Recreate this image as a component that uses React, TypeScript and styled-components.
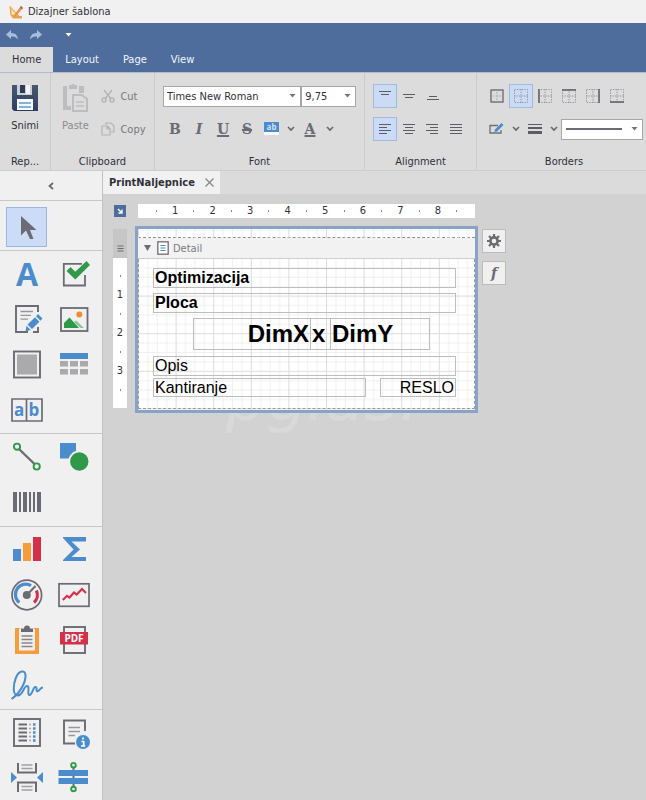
import React from 'react';
import styled, { createGlobalStyle } from 'styled-components';

const GREY = '#6b6b75';
const BLUE = '#4a8ccc';
const GREEN = '#2f994a';
const RED = '#d52f49';
const ORANGE = '#f79c38';

const GlobalStyle = createGlobalStyle`
  * { box-sizing: border-box; }
  body { margin: 0; }
  body, button, input, select {
    font-family: 'DejaVu Sans Condensed', 'DejaVu Sans', sans-serif;
    font-size: 11px;
    color: #30303a;
  }
  button { padding: 0; border: 0; background: none; }
  h1, p { margin: 0; font-size: 11px; font-weight: normal; }
  svg { display: block; flex: none; overflow: visible; }
`;

const Window = styled.div`
  display: flex;
  flex-direction: column;
  height: 100vh;
  overflow: hidden;
  background: #d2d2d2;
`;

const TitleBar = styled.header`
  display: flex;
  align-items: center;
  gap: 4px;
  height: 23px;
  flex: none;
  padding: 0 8px;
  background: #f1f1f1;
`;

const QuickAccess = styled.div`
  display: flex;
  align-items: center;
  gap: 10px;
  height: 24px;
  flex: none;
  padding: 0 5px;
  background: #4e6d9d;
`;

const QuickButton = styled.button<{ $spaced?: boolean }>`
  display: flex;
  align-items: center;
  justify-content: center;
  width: 14px;
  height: 14px;
  margin-left: ${(p) => (p.$spaced ? '8px' : '0')};
`;

const RibbonTabs = styled.nav`
  display: flex;
  height: 25px;
  flex: none;
  background: #4e6d9d;
`;

const RibbonTab = styled.button<{ $active?: boolean }>`
  padding: 0 12px;
  color: ${(p) => (p.$active ? '#30303a' : '#f4f7fb')};
  background: ${(p) => (p.$active ? '#dcdcdc' : 'transparent')};
`;

const Ribbon = styled.div`
  display: flex;
  height: 99px;
  flex: none;
  overflow: hidden;
  background: #dcdcdc;
  border-top: 1px solid #b4bccb;
  border-bottom: 1px solid #cdcdcd;
`;

const Group = styled.section<{ $width: number }>`
  display: flex;
  flex-direction: column;
  justify-content: space-between;
  width: ${(p) => p.$width}px;
  flex: none;
  padding: 11px 8px 0;
  border-right: 1px solid #cbcbcb;
`;

const GroupBody = styled.div`
  display: flex;
  justify-content: center;
  gap: 10px;
`;

const GroupLabel = styled.p`
  line-height: 16px;
  text-align: center;
`;

const Rows = styled.div`
  display: flex;
  flex-direction: column;
  gap: 9px;
`;

const Row = styled.div`
  display: flex;
  align-items: center;
  height: 24px;
`;

const LargeButton = styled.button<{ $muted?: boolean }>`
  display: flex;
  flex-direction: column;
  align-items: center;
  gap: 3px;
  width: 32px;
  height: 57px;
  color: ${(p) => (p.$muted ? '#8b8b8f' : '#30303a')};
`;

const SmallButton = styled.button`
  display: flex;
  align-items: center;
  gap: 5px;
  color: #77777b;
`;

const ToolButton = styled.button<{ $on?: boolean }>`
  display: flex;
  align-items: center;
  justify-content: center;
  width: 24px;
  height: 24px;
  border: 1px solid ${(p) => (p.$on ? '#a3b9df' : 'transparent')};
  background: ${(p) => (p.$on ? '#cbdaf5' : 'transparent')};
`;

const Letter = styled.span<{ $kind?: 'italic' | 'underline' | 'strike' }>`
  font-family: 'DejaVu Serif', serif;
  font-size: 14px;
  line-height: 16px;
  font-weight: bold;
  color: ${GREY};
  font-style: ${(p) => (p.$kind === 'italic' ? 'italic' : 'normal')};
  text-decoration: ${(p) =>
    p.$kind === 'underline' ? 'underline 2px' : p.$kind === 'strike' ? 'line-through 2px' : 'none'};
`;

const ChevronButton = styled.button`
  display: flex;
  align-items: center;
  justify-content: center;
  width: 15px;
  height: 24px;
`;

const SelectBox = styled.div<{ $width: number }>`
  display: grid;
  align-items: center;
  width: ${(p) => p.$width}px;
  height: 21px;
  background: #fff;
  border: 1px solid #a6a6a6;
  > * { grid-area: 1 / 1; }
  > svg { justify-self: end; margin-right: 4px; pointer-events: none; }
`;

const Select = styled.select`
  appearance: none;
  width: 100%;
  height: 19px;
  padding: 0 3px;
  border: 0;
  background: transparent;
`;

const LineSample = styled.span`
  height: 2px;
  margin: 0 20px 0 4px;
  background: ${GREY};
`;

const Main = styled.div`
  display: flex;
  flex: 1;
  min-height: 0;
`;

const Toolbox = styled.aside`
  width: 103px;
  flex: none;
  overflow: hidden;
  background: #f0f0f0;
  border-right: 1px solid #c2c2c2;
`;

const Collapse = styled.button`
  display: flex;
  align-items: center;
  justify-content: center;
  width: 100%;
  height: 30px;
  border-bottom: 1px solid #c8c8c8;
`;

const ToolSection = styled.div`
  display: grid;
  grid-template-columns: 41px 41px;
  grid-auto-rows: 45px;
  column-gap: 6px;
  align-items: center;
  padding: 0 6px 2px;
  border-bottom: 1px solid #c8c8c8;
`;

const PointerSection = styled(ToolSection)`
  padding: 3px 6px 1px;
`;

const Tool = styled.button<{ $on?: boolean }>`
  display: flex;
  align-items: center;
  justify-content: center;
  height: 40px;
  border: 1px solid ${(p) => (p.$on ? '#9db5e0' : 'transparent')};
  background: ${(p) => (p.$on ? '#ccdbf6' : 'transparent')};
`;

const Workspace = styled.main`
  flex: 1;
  min-width: 0;
`;

const DocTabs = styled.div`
  display: flex;
  height: 23px;
  background: #dbdbdb;
`;

const DocTab = styled.div`
  display: flex;
  align-items: center;
  gap: 10px;
  padding: 0 6px;
  background: #f1f1f1;
  font-weight: bold;
`;

const Designer = styled.div`
  display: grid;
  grid-template-columns: 14px 343px 24px;
  grid-template-rows: 15px 187px;
  gap: 7px 8px;
  padding: 10px;
`;

const Corner = styled.button`
  display: flex;
  align-items: center;
  justify-content: center;
  width: 12px;
  height: 12px;
  margin: 1px;
  background: #4e6d9d;
`;

const HRuler = styled.div`
  display: grid;
  grid-auto-flow: column;
  grid-auto-columns: 1fr;
  align-items: center;
  justify-items: center;
  height: 14px;
  margin: 0 3px;
  padding: 0 9px;
  background: #fff;
`;

const VRuler = styled.div`
  margin: 3px 0 5px;
  display: flex;
  flex-direction: column;
`;

const VRulerHead = styled.div`
  display: flex;
  align-items: flex-end;
  justify-content: center;
  height: 29px;
  padding-bottom: 6px;
  background: #c6c6c6;
`;

const VRulerScale = styled.div`
  display: grid;
  grid-auto-rows: 1fr;
  align-items: center;
  justify-items: center;
  flex: 1;
  padding: 9px 0;
  background: #fff;
`;

const Tick = styled.i`
  width: 1px;
  height: 2px;
  background: #8a8a8a;
`;

const Mark = styled.span`
  line-height: 14px;
`;

const SurfaceArea = styled.div`
  position: relative;
`;

const Watermark = styled.span`
  position: absolute;
  left: 91px;
  top: 135px;
  font: italic 64px/74px 'DejaVu Sans', sans-serif;
  color: #d9d9d9;
`;

const Surface = styled.div`
  position: relative;
  height: 187px;
  display: flex;
  flex-direction: column;
  border: 3px solid #8aa1c8;
  background: #fff;
`;

const GridLines = styled.svg`
  position: absolute;
  left: 0;
  top: 0;
  width: 100%;
  height: 100%;
`;

const Margin = styled.div`
  height: 9px;
  border-bottom: 1px dashed #8c8c8c;
`;

const BandHeader = styled.div`
  position: relative;
  display: flex;
  align-items: center;
  gap: 6px;
  height: 21px;
  padding: 0 6px;
  background: #f2f2f2;
  border-bottom: 1px solid #cfcfcf;
  color: #7a7a80;
`;

const BandName = styled.span`
  margin-left: -2px;
`;

const Band = styled.div`
  position: relative;
  flex: 1;
  margin-bottom: 1px;
  border: 1px dashed #9a9a9a;
  border-top: 0;
`;

const Field = styled.div<{
  $x: number;
  $y: number;
  $w: number;
  $h: number;
  $size?: number;
  $bold?: boolean;
  $align?: string;
}>`
  position: absolute;
  left: ${(p) => p.$x}px;
  top: ${(p) => p.$y}px;
  width: ${(p) => p.$w}px;
  height: ${(p) => p.$h}px;
  padding: 0 1px;
  border: 1px solid #bdbdbd;
  font-family: 'Liberation Sans', Arial, sans-serif;
  font-size: ${(p) => p.$size ?? 16}px;
  line-height: ${(p) => p.$h - 2}px;
  font-weight: ${(p) => (p.$bold ? 'bold' : 'normal')};
  text-align: ${(p) => p.$align ?? 'left'};
  white-space: nowrap;
  color: #000;
`;

const SideButtons = styled.div`
  display: flex;
  flex-direction: column;
  gap: 8px;
  padding-top: 3px;
  margin-left: -4px;
`;

const SideButton = styled.button`
  display: flex;
  align-items: center;
  justify-content: center;
  width: 24px;
  height: 24px;
  background: #f0f0f0;
  border: 1px solid #bcbcbc;
`;

const Fx = styled.span`
  font: italic bold 14px/16px 'DejaVu Serif', serif;
  color: ${GREY};
`;

/* ---------- small glyphs ---------- */

const Caret = ({ color = '#77777b' }: { color?: string }) => (
  <svg width="7" height="4" viewBox="0 0 7 4"><path d="M0.5 0H6.5L3.5 3.5Z" fill={color} /></svg>
);

const Chevron = () => (
  <svg width="8" height="6" viewBox="0 0 8 6"><path d="M1 1L4 4L7 1" fill="none" stroke="#66666c" strokeWidth="1.6" /></svg>
);

const Lines = ({ rows, top = 0 }: { rows: [number, number][]; top?: number }) => (
  <svg width="14" height="14" viewBox="0 0 14 14">
    {rows.map(([a, b], i) => (
      <path key={i} d={`M${a} ${top + i * 3 + 0.5}H${b}`} stroke="#5c5c66" />
    ))}
  </svg>
);

const BorderIcon = ({ side }: { side: 'all' | 'none' | 'left' | 'top' | 'right' | 'bottom' }) => (
  <svg width="14" height="14" viewBox="0 0 14 14" fill="none">
    {side === 'all' ? (
      <>
        <path d="M7 3V11M3 7H11" stroke="#b0b0b4" strokeDasharray="2 1" />
        <rect x="1" y="1" width="12" height="12" stroke="#66666e" strokeWidth="1.3" />
      </>
    ) : (
      <path d="M0.5 0.5H13.5V13.5H0.5ZM7 0V14M0 7H14" stroke="#8e8e98" strokeDasharray="1.3 1.2" strokeWidth="0.9" />
    )}
    {side === 'left' && <path d="M1 0V14" stroke="#5c5c66" strokeWidth="1.5" />}
    {side === 'right' && <path d="M13 0V14" stroke="#5c5c66" strokeWidth="1.5" />}
    {side === 'top' && <path d="M0 1H14" stroke="#5c5c66" strokeWidth="1.5" />}
    {side === 'bottom' && <path d="M0 13H14" stroke="#5c5c66" strokeWidth="1.5" />}
  </svg>
);

/* ---------- toolbox icons ---------- */

const Svg32 = ({ children }: { children: React.ReactNode }) => (
  <svg width="32" height="32" viewBox="0 0 32 32" fill="none">{children}</svg>
);

const toolIcons: Record<string, React.ReactNode> = {
  Pointer: <path d="M10 5V24.5L15 19.5L19 28H22.5L19 19H25.5Z" fill={GREY} />,
  Label: <text x="16" y="28" textAnchor="middle" fontFamily="Open Sans, sans-serif" fontWeight="bold" fontSize="32" fill={BLUE}>A</text>,
  'Check Box': (
    <>
      <path d="M24 5.8H5.8V27.5H27V17" stroke={GREY} strokeWidth="1.8" />
      <path d="M8.5 13L12.5 9L17.3 13.8L28.5 3L32 7L17.3 21.5Z" fill={GREEN} />
    </>
  ),
  'Rich Text': (
    <>
      <path d="M27 9V3H5V29H17M27 24V29H22" stroke={GREY} strokeWidth="1.9" />
      <path d="M9.5 8.5H22M9.5 12.3H20M9.5 16.2H17" stroke="#96969c" strokeWidth="1.3" />
      <path d="M27 11L31.5 15.5L29.5 17.8L25 13.3ZM24 14.3L28.5 18.8L21 26L16.5 21.5ZM15.5 22.8L19.7 27L14.5 28.5Z" fill={BLUE} />
    </>
  ),
  'Picture Box': (
    <>
      <rect x="3" y="5" width="26.5" height="23" stroke={GREY} strokeWidth="1.8" />
      <path d="M6 25V20L11.5 14.500L21 25Z" fill={GREEN} />
      <path d="M16 19L18 17.5L26 25H22.5Z" fill="#8bc29a" />
      <circle cx="21.3" cy="11.5" r="3" fill="#f58b2c" />
    </>
  ),
  Panel: (
    <>
      <rect x="3" y="3.5" width="26" height="26" stroke={GREY} strokeWidth="1.9" />
      <rect x="6" y="6.5" width="20" height="20" fill="#aaaaad" />
    </>
  ),
  Table: (
    <>
      <rect x="2" y="5" width="28" height="6" fill={BLUE} />
      <path d="M2 13H10V18.500H2ZM12 13H20V18.500H12ZM22 13H30V18.500H22ZM2 21H10V26.500H2ZM12 21H20V26.500H12ZM22 21H30V26.500H22Z" fill="#aaaaad" />
    </>
  ),
  'Character Comb': (
    <>
      <path d="M1 6H31V28H1ZM15.5 6V28" stroke={GREY} strokeWidth="1.7" />
      <text x="8.2" y="23" textAnchor="middle" fontFamily="Open Sans, sans-serif" fontWeight="bold" fontSize="17" fill={BLUE}>a</text>
      <text x="23" y="23" textAnchor="middle" fontFamily="Open Sans, sans-serif" fontWeight="bold" fontSize="17" fill={BLUE}>b</text>
    </>
  ),
  Line: (
    <>
      <path d="M8 8L23.5 23" stroke={GREY} strokeWidth="2.4" />
      <circle cx="6" cy="5.7" r="3.1" stroke={GREEN} strokeWidth="1.9" />
      <circle cx="25.7" cy="25.5" r="3.1" stroke={GREEN} strokeWidth="1.9" />
    </>
  ),
  Shape: (
    <>
      <rect x="2" y="2" width="16" height="15.5" fill={BLUE} />
      <circle cx="21.3" cy="20.5" r="11" fill="#f0f0f0" />
      <circle cx="21.3" cy="20.5" r="9.2" fill={GREEN} />
    </>
  ),
  'Bar Code': <path d="M2 6H6V26H2ZM8 6H10V26H8ZM12 6H16V26H12ZM18 6H20V26H18ZM22 6H24V26H22ZM26 6H30V26H26Z" fill={GREY} />,
  Chart: (
    <>
      <rect x="2" y="15" width="8" height="12" fill={BLUE} />
      <rect x="12" y="9" width="8" height="18" fill={ORANGE} />
      <rect x="22" y="3" width="8" height="24" fill={RED} />
    </>
  ),
  'Pivot Grid': <path d="M5 3H28V7.500H13.500L22 15.500L13.500 23H28V27H5V26L15.5 15.500L5 4Z" fill={BLUE} />,
  Gauge: (
    <>
      <circle cx="15.8" cy="16" r="14.8" stroke={GREY} strokeWidth="1.7" />
      <path d="M8.3 23.5A10.3 10.3 0 0 1 20 6.6" stroke={BLUE} strokeWidth="3.2" />
      <path d="M25.4 11.5A10.3 10.3 0 0 1 23 23.5" stroke={RED} strokeWidth="3.2" />
      <path d="M15.8 16L24.5 7" stroke={GREY} strokeWidth="2" />
      <circle cx="15.8" cy="16" r="4" fill={GREY} />
    </>
  ),
  Sparkline: (
    <>
      <rect x="1" y="4.8" width="30" height="22.5" stroke={GREY} strokeWidth="1.7" />
      <path d="M4.8 21L9 16.8L11.5 18.5L16 13.5L18.7 15.5L24 10L28 14" stroke={RED} strokeWidth="2.1" />
    </>
  ),
  Clipboard: (
    <>
      <path d="M4 4H9V8H23V4H28V30H4Z" fill={ORANGE} />
      <rect x="8" y="5" width="16" height="21.5" fill="#f0f0f0" />
      <path d="M10 8V4.5H13A3 3 0 0 1 19 4.5H22V8Z" fill={GREY} />
      <path d="M10.5 12H21.5M10.5 15.5H21.5M10.5 19H21.5M10.5 22.5H21.5" stroke="#85858c" strokeWidth="1.4" />
    </>
  ),
  'PDF Content': (
    <>
      <rect x="6" y="3" width="21" height="26" stroke={GREY} strokeWidth="1.9" />
      <rect x="2" y="8" width="28" height="12.5" fill={RED} />
      <text x="16" y="18" textAnchor="middle" fontFamily="Open Sans, sans-serif" fontWeight="bold" fontSize="10" fill="#fff">PDF</text>
    </>
  ),
  Signature: (
    <path d="M0.500 30C8 25 15 14 14.500 6C14 0.500 8 1.500 5 8.500C1.500 17 2 26 6.500 26.500C12 27 12.500 17 16 17C19.500 17 15.500 26 18.500 26C21.500 26 22 17.500 24.500 18C27 18.500 24 23 27 22C29 21 29.500 18.500 32 18.500" stroke={BLUE} strokeWidth="2" />
  ),
  'Table Of Contents': (
    <>
      <rect x="3" y="2" width="26" height="27" stroke={GREY} strokeWidth="1.9" />
      <path d="M7.500 7.500H16M7.500 11.500H16M7.500 15.500H16M7.500 19.500H16M7.500 23.500H16" stroke={GREY} strokeWidth="1.9" />
      <path d="M18 7.500H20M18 11.500H20M18 15.500H20M18 19.500H20M18 23.500H20" stroke="#a5a5aa" strokeWidth="1.6" />
      <path d="M22 7.500H24.500M22 11.500H24.500M22 15.500H24.500M22 19.500H24.500M22 23.500H24.500" stroke={BLUE} strokeWidth="2.300" />
    </>
  ),
  'Page Info': (
    <>
      <path d="M27 14V3.500H6V26.500H17" stroke={GREY} strokeWidth="1.9" />
      <path d="M10.500 10.500H22M10.500 14.500H22M10.500 18.500H17" stroke="#96969c" strokeWidth="1.3" />
      <circle cx="25" cy="25" r="7" fill={BLUE} />
      <path d="M25 20.500V22.500M23.500 24.500H25.700V29M23 29H27.200" stroke="#fff" strokeWidth="1.7" />
    </>
  ),
  'Page Break': (
    <>
      <path d="M7 1V10.500H25V1M7 30V20.500H25V30" stroke={GREY} strokeWidth="2" />
      <path d="M10.500 3H21.500M10.500 6.500H21.500M10.500 24.500H21.500M10.500 28H21.500" stroke="#a0a0a5" strokeWidth="1.300" />
      <path d="M0 10V21L6 15.500ZM32 10V21L26 15.500Z" fill={BLUE} />
    </>
  ),
  'Cross-band Line': (
    <>
      <path d="M15.500 5V25" stroke={GREY} strokeWidth="2" />
      <path d="M0.500 8H30V14H0.500ZM0.500 16H30V22H0.500Z" fill={BLUE} />
      <circle cx="15.500" cy="3.200" r="2.300" stroke={GREEN} strokeWidth="1.900" />
      <circle cx="15.500" cy="27" r="2.300" stroke={GREEN} strokeWidth="1.900" />
    </>
  ),
};

const toolSections = [
  ['Label', 'Check Box', 'Rich Text', 'Picture Box', 'Panel', 'Table', 'Character Comb'],
  ['Line', 'Shape', 'Bar Code'],
  ['Chart', 'Pivot Grid', 'Gauge', 'Sparkline', 'Clipboard', 'PDF Content', 'Signature'],
  ['Table Of Contents', 'Page Info', 'Page Break', 'Cross-band Line'],
];

const ToolItem = ({ name, on }: { name: string; on?: boolean }) => (
  <Tool aria-label={name} $on={on}><Svg32>{toolIcons[name]}</Svg32></Tool>
);

/* ---------- ribbon icons ---------- */

const AppIcon = () => (
  <svg width="16" height="16" viewBox="0 0 16 16">
    <path d="M2 2.500L11 12L3 11.500Z" fill="#f8cf7c" stroke="#e9a04a" />
    <path d="M4 6.500L7 10L4.500 10Z" fill="#fff3d8" />
    <path d="M3 12H14V14.500H5Z" fill="#e8a254" />
    <path d="M13 2L15 4L8 12L6 12.500L6.500 10.500Z" fill="#e9924a" />
    <path d="M13 2L15 4L13.800 5.300L11.800 3.400Z" fill="#a86a58" />
  </svg>
);

const UndoIcon = ({ flip }: { flip?: boolean }) => (
  <svg width="14" height="14" viewBox="0 0 14 14">
    <path
      d={flip ? 'M13 6.500L8 2V5C4 5 1.500 7 1 11.500C3 9 5 8.500 8 8.500V11Z' : 'M1 6.500L6 2V5C10 5 12.500 7 13 11.500C11 9 9 8.500 6 8.500V11Z'}
      fill="#a9bddd"
    />
  </svg>
);

const SaveIcon = () => (
  <svg width="28" height="32" viewBox="0 0 28 32">
    <defs>
      <linearGradient id="disk" x1="0" y1="0" x2="0" y2="1">
        <stop offset="0" stopColor="#47586f" />
        <stop offset="1" stopColor="#2d3e63" />
      </linearGradient>
    </defs>
    <path d="M1 1H27V27H3L1 25Z" fill="url(#disk)" />
    <rect x="6" y="1" width="15" height="10" fill="#c9d0da" />
    <rect x="9" y="1" width="5" height="8" fill="#2f3d52" />
    <rect x="15" y="1" width="4" height="9" fill="#f1f3f6" />
    <rect x="6" y="15" width="16" height="11" fill="#f7f9fb" />
    <path d="M8 19H20M8 23H20" stroke="#5b9bd8" strokeWidth="1.500" />
  </svg>
);

const PasteIcon = () => (
  <svg width="28" height="32" viewBox="0 0 28 32" fill="none">
    <path d="M2 2H6V22H10V26H2ZM18 2H23V9H18Z" fill="#bdbdbf" />
    <path d="M8 5V1H10A3 3 0 0 1 14 1H16V5Z" fill="#bdbdbf" />
    <path d="M12 11H21L26 15V27H12Z" stroke="#bdbdbf" strokeWidth="2" />
    <path d="M15 18H23M15 22H23" stroke="#bdbdbf" strokeWidth="1.600" />
  </svg>
);

const CutIcon = () => (
  <svg width="14" height="14" viewBox="0 0 14 14" fill="none" stroke="#b4b4b7" strokeWidth="1.400">
    <path d="M3 1L10 10M11 1L4 10" />
    <circle cx="3" cy="11" r="2" /><circle cx="11" cy="11" r="2" />
  </svg>
);

const CopyIcon = () => (
  <svg width="14" height="14" viewBox="0 0 14 14" fill="none" stroke="#b4b4b7" strokeWidth="1.200">
    <path d="M5 3V1H10L13 4V10H10M1 4H6.500L9 6.500V13H1ZM6 4V7H9" />
  </svg>
);

const ColorSwatch = () => (
  <svg width="16" height="16" viewBox="0 0 16 16">
    <rect x="1" y="1" width="15" height="10" fill={BLUE} />
    <text x="8.500" y="9" textAnchor="middle" fontFamily="Open Sans, sans-serif" fontWeight="bold" fontSize="8" fill="#cfe3f7">ab</text>
    <rect x="1" y="11" width="15" height="3" fill="#fff" />
  </svg>
);

const PenIcon = () => (
  <svg width="15" height="14" viewBox="0 0 15 14" fill="none">
    <path d="M9 3.500H1V11H12V8" stroke="#6f6f77" strokeWidth="1.300" />
    <path d="M12.500 1L14.500 3L8 9.500L5.500 10L6 7.500Z" fill={BLUE} />
  </svg>
);

const L: [number, number] = [1, 13];

const marks = (count: number) =>
  Array.from({ length: count }, (_, i) => (i % 2 ? <Mark key={i}>{(i + 1) / 2}</Mark> : <Tick key={i} />));

export default function App() {
  return (
    <Window>
      <GlobalStyle />
      <TitleBar><AppIcon /><h1>Dizajner šablona</h1></TitleBar>
      <QuickAccess>
        <QuickButton aria-label="Undo"><UndoIcon /></QuickButton>
        <QuickButton aria-label="Redo"><UndoIcon flip /></QuickButton>
        <QuickButton aria-label="Customize" $spaced><Caret color="#fff" /></QuickButton>
      </QuickAccess>
      <RibbonTabs>
        <RibbonTab $active>Home</RibbonTab>
        <RibbonTab>Layout</RibbonTab>
        <RibbonTab>Page</RibbonTab>
        <RibbonTab>View</RibbonTab>
      </RibbonTabs>
      <Ribbon>
        <Group $width={51}>
          <GroupBody><LargeButton><SaveIcon />Snimi</LargeButton></GroupBody>
          <GroupLabel>Rep...</GroupLabel>
        </Group>
        <Group $width={104}>
          <GroupBody>
            <LargeButton $muted><PasteIcon />Paste</LargeButton>
            <Rows>
              <Row><SmallButton><CutIcon />Cut</SmallButton></Row>
              <Row><SmallButton><CopyIcon />Copy</SmallButton></Row>
            </Rows>
          </GroupBody>
          <GroupLabel>Clipboard</GroupLabel>
        </Group>
        <Group $width={210}>
          <Rows>
            <Row>
              <SelectBox $width={139}>
                <Select aria-label="Font name"><option>Times New Roman</option></Select><Caret />
              </SelectBox>
              <SelectBox $width={55}>
                <Select aria-label="Font size"><option>9,75</option></Select><Caret />
              </SelectBox>
            </Row>
            <Row>
              <ToolButton aria-label="Bold"><Letter>B</Letter></ToolButton>
              <ToolButton aria-label="Italic"><Letter $kind="italic">I</Letter></ToolButton>
              <ToolButton aria-label="Underline"><Letter $kind="underline">U</Letter></ToolButton>
              <ToolButton aria-label="Strikeout"><Letter $kind="strike">S</Letter></ToolButton>
              <ToolButton aria-label="Background color"><ColorSwatch /></ToolButton>
              <ChevronButton aria-label="More background colors"><Chevron /></ChevronButton>
              <ToolButton aria-label="Font color"><Letter $kind="underline">A</Letter></ToolButton>
              <ChevronButton aria-label="More font colors"><Chevron /></ChevronButton>
            </Row>
          </Rows>
          <GroupLabel>Font</GroupLabel>
        </Group>
        <Group $width={112}>
          <Rows>
            <Row>
              <ToolButton $on aria-label="Align top"><Lines top={2} rows={[L, [3, 11]]} /></ToolButton>
              <ToolButton aria-label="Align middle"><Lines top={5} rows={[L, [3, 11]]} /></ToolButton>
              <ToolButton aria-label="Align bottom"><Lines top={7} rows={[[3, 11], L]} /></ToolButton>
            </Row>
            <Row>
              <ToolButton $on aria-label="Align left"><Lines top={2} rows={[L, [1, 9], L, [1, 9]]} /></ToolButton>
              <ToolButton aria-label="Align center"><Lines top={2} rows={[L, [3, 11], L, [3, 11]]} /></ToolButton>
              <ToolButton aria-label="Align right"><Lines top={2} rows={[L, [5, 13], L, [5, 13]]} /></ToolButton>
              <ToolButton aria-label="Justify"><Lines top={2} rows={[L, L, L, L]} /></ToolButton>
            </Row>
          </Rows>
          <GroupLabel>Alignment</GroupLabel>
        </Group>
        <Group $width={175}>
          <Rows>
            <Row>
              <ToolButton aria-label="All borders"><BorderIcon side="all" /></ToolButton>
              <ToolButton $on aria-label="No borders"><BorderIcon side="none" /></ToolButton>
              <ToolButton aria-label="Left border"><BorderIcon side="left" /></ToolButton>
              <ToolButton aria-label="Top border"><BorderIcon side="top" /></ToolButton>
              <ToolButton aria-label="Right border"><BorderIcon side="right" /></ToolButton>
              <ToolButton aria-label="Bottom border"><BorderIcon side="bottom" /></ToolButton>
            </Row>
            <Row>
              <ToolButton aria-label="Border color"><PenIcon /></ToolButton>
              <ChevronButton aria-label="More border colors"><Chevron /></ChevronButton>
              <ToolButton aria-label="Border width">
                <svg width="14" height="10" viewBox="0 0 14 10">
                  <path d="M0 0H14V1H0ZM0 3H14V5H0ZM0 7H14V10H0Z" fill="#5c5c66" />
                </svg>
              </ToolButton>
              <ChevronButton aria-label="More border widths"><Chevron /></ChevronButton>
              <SelectBox $width={84}>
                <LineSample />
                <Select aria-label="Border style"><option aria-label="Solid" /></Select>
                <Caret />
              </SelectBox>
            </Row>
          </Rows>
          <GroupLabel>Borders</GroupLabel>
        </Group>
      </Ribbon>
      <Main>
        <Toolbox>
          <Collapse aria-label="Collapse toolbox">
            <svg width="6" height="8" viewBox="0 0 6 8"><path d="M5 1L1.500 4L5 7" fill="none" stroke="#66666c" strokeWidth="1.700" /></svg>
          </Collapse>
          <PointerSection><ToolItem name="Pointer" on /></PointerSection>
          {toolSections.map((names) => (
            <ToolSection key={names[0]}>
              {names.map((name) => <ToolItem key={name} name={name} />)}
            </ToolSection>
          ))}
        </Toolbox>
        <Workspace>
          <DocTabs>
            <DocTab>
              PrintNaljepnice
              <button aria-label="Close">
                <svg width="9" height="9" viewBox="0 0 9 9"><path d="M0.500 0.500L8.500 8.500M8.500 0.500L0.500 8.500" stroke="#888" strokeWidth="1.300" /></svg>
              </button>
            </DocTab>
          </DocTabs>
          <Designer>
            <Corner aria-label="Select report">
              <svg width="6" height="6" viewBox="0 0 6 6"><path d="M1 1L5 5M5 1.500V5H1.500" fill="none" stroke="#fff" strokeWidth="1.300" /></svg>
            </Corner>
            <HRuler>{marks(17)}</HRuler>
            <span />
            <VRuler>
              <VRulerHead>
                <svg width="7" height="7" viewBox="0 0 7 7"><path d="M0.500 1H6.500M0.500 3.500H6.500M0.500 6H6.500" stroke="#6b6b75" /></svg>
              </VRulerHead>
              <VRulerScale>{marks(7)}</VRulerScale>
            </VRuler>
            <SurfaceArea>
              <Watermark aria-hidden="true">pglas!</Watermark>
              <Surface>
                <GridLines aria-hidden="true">
                  <defs>
                    <pattern id="cells" width="37.600" height="37.600" patternUnits="userSpaceOnUse" y="29">
                      <path d="M9.900 0V38M19.300 0V38M28.700 0V38M0 9.900H38M0 19.300H38M0 28.700H38" stroke="#f0f0f0" />
                      <path d="M0.500 0V38M0 0.500H38" stroke="#dcdcdc" />
                    </pattern>
                  </defs>
                  <rect width="100%" height="100%" fill="url(#cells)" />
                </GridLines>
                <Margin />
                <BandHeader>
                  <svg width="7" height="6" viewBox="0 0 7 6"><path d="M0 0H7L3.500 6Z" fill="#6b6b75" /></svg>
                  <svg width="12" height="14" viewBox="0 0 12 14" fill="none">
                    <rect x="0.800" y="0.800" width="10.400" height="12.400" fill="#fff" stroke="#77777f" strokeWidth="1.400" />
                    <path d="M3.500 4.500H8.500M3.500 7H8.500M3.500 9.500H8.500" stroke={BLUE} strokeWidth="1.200" />
                  </svg>
                  <BandName>Detail</BandName>
                </BandHeader>
                <Band>
                  <Field $x={14} $y={9} $w={303} $h={20} $bold>Optimizacija</Field>
                  <Field $x={14} $y={34} $w={303} $h={20} $bold>Ploca</Field>
                  <Field $x={54} $y={59} $w={118} $h={32} $size={24} $bold $align="right">DimX</Field>
                  <Field $x={171} $y={59} $w={21} $h={32} $size={24} $bold>x</Field>
                  <Field $x={191} $y={59} $w={100} $h={32} $size={24} $bold>DimY</Field>
                  <Field $x={14} $y={97} $w={303} $h={20}>Opis</Field>
                  <Field $x={14} $y={119} $w={213} $h={19}>Kantiranje</Field>
                  <Field $x={241} $y={119} $w={76} $h={19} $align="right">RESLO</Field>
                </Band>
              </Surface>
            </SurfaceArea>
            <SideButtons>
              <SideButton aria-label="Smart tag">
                <svg width="14" height="14" viewBox="0 0 14 14" fill="none">
                  <circle cx="7" cy="7" r="3.600" stroke={GREY} strokeWidth="2.600" />
                  <path d="M7 0V3M7 11V14M0 7H3M11 7H14M2 2L4.200 4.200M9.800 9.800L12 12M12 2L9.800 4.200M4.200 9.800L2 12" stroke={GREY} strokeWidth="2.200" />
                </svg>
              </SideButton>
              <SideButton aria-label="Expressions"><Fx>f</Fx></SideButton>
            </SideButtons>
          </Designer>
        </Workspace>
      </Main>
    </Window>
  );
}
